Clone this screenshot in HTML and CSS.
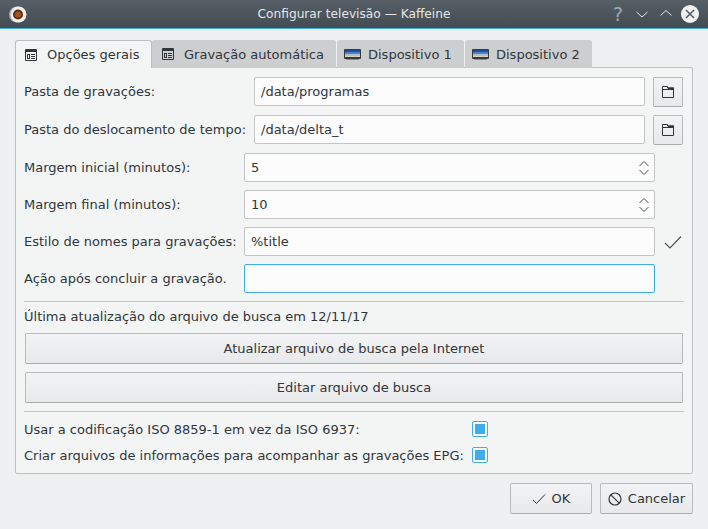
FILE: index.html
```html
<!DOCTYPE html>
<html lang="pt">
<head>
    <meta charset="UTF-8">
    <title>Configurar televisão — Kaffeine</title>
    <link rel="stylesheet" href="styles.css">
</head>
<body>

    <div class="titlebar">
        <svg class="app-icon" width="18" height="18" viewBox="0 0 18 18">
            <circle cx="8" cy="9.5" r="8" fill="#a9adaf"/>
            <circle cx="9.5" cy="9.5" r="8" fill="#f1efec"/>
            <circle cx="9" cy="9.5" r="5" fill="#5d3018"/>
            <circle cx="9" cy="9.5" r="3" fill="#a5521f"/>
        </svg>
        <span class="title">Configurar televisão — Kaffeine</span>
        <div class="win-buttons">
            <span class="help">?</span>
            <svg width="14" height="14" viewBox="0 0 14 14"><path d="M1.5 5 7 10l5.5-5" fill="none" stroke="#e3e5e7"/></svg>
            <svg width="14" height="14" viewBox="0 0 14 14"><path d="M1.5 8.5 7 3.500l5.5 5" fill="none" stroke="#e3e5e7"/></svg>
            <svg class="close" width="18" height="18" viewBox="0 0 18 18"><circle cx="9" cy="9" r="9" fill="#f2f3f3"/><path d="M5 5l8 8M13 5l-8 8" stroke="#4d5860" stroke-width="1.5"/></svg>
        </div>
    </div>

    <div class="dialog">
        <div class="tabs">
            <div class="tab active">
                <svg class="tab-icon" width="12" height="12" viewBox="0 0 12 12"><path d="M.5.5h11v11H.5z" fill="none" stroke="#31363b"/><path d="M1 1h10v2H1zM2 5h3v5H2zM6 5h4v1H6zM6 7h4v1H6zM6 9h4v1H6z" fill="#31363b"/><path d="M3 6h1v3H3z" fill="#f3f5f5"/></svg>
                Opções gerais
            </div>
            <div class="tab">
                <svg class="tab-icon" width="12" height="12" viewBox="0 0 12 12"><path d="M.5.5h11v11H.5z" fill="none" stroke="#31363b"/><path d="M1 1h10v2H1zM2 5h3v5H2zM6 5h4v1H6zM6 7h4v1H6zM6 9h4v1H6z" fill="#31363b"/><path d="M3 6h1v3H3z" fill="#cdcecf"/></svg>
                Gravação automática
            </div>
            <div class="tab tab-dev">
                <svg class="tab-icon" width="17" height="11" viewBox="0 0 17 11"><rect width="17" height="10" rx="1" fill="#3a3734"/><rect x="1" y="1" width="15" height="2" fill="#1f4f94"/><rect x="1" y="3" width="15" height="2" fill="#4f82c0"/><rect x="1" y="5" width="15" height="2" fill="#a9c0da"/><rect x="1" y="7" width="15" height="1" fill="#d3d2c4"/><rect x="2" y="10" width="13" height="1" fill="#8d8a86"/></svg>
                Dispositivo 1
            </div>
            <div class="tab tab-dev">
                <svg class="tab-icon" width="17" height="11" viewBox="0 0 17 11"><rect width="17" height="10" rx="1" fill="#3a3734"/><rect x="1" y="1" width="15" height="2" fill="#1f4f94"/><rect x="1" y="3" width="15" height="2" fill="#4f82c0"/><rect x="1" y="5" width="15" height="2" fill="#a9c0da"/><rect x="1" y="7" width="15" height="1" fill="#d3d2c4"/><rect x="2" y="10" width="13" height="1" fill="#8d8a86"/></svg>
                Dispositivo 2
            </div>
        </div>

        <div class="panel">
            <div class="row row-path">
                <label class="label-wide">Pasta de gravações:</label>
                <div class="field grow">/data/programas</div>
                <button class="tool-btn">
                    <svg width="12" height="12" viewBox="0 0 12 12"><path d="M.5 11.500V.5h5V2h6v9.500z" fill="none" stroke="#31363b"/><path d="M6 1.500h6V4H1V3h5z" fill="#31363b"/></svg>
                </button>
            </div>
            <div class="row row-path">
                <label class="label-wide">Pasta do deslocamento de tempo:</label>
                <div class="field grow">/data/delta_t</div>
                <button class="tool-btn">
                    <svg width="12" height="12" viewBox="0 0 12 12"><path d="M.5 11.500V.5h5V2h6v9.500z" fill="none" stroke="#31363b"/><path d="M6 1.500h6V4H1V3h5z" fill="#31363b"/></svg>
                </button>
            </div>
            <div class="row">
                <label class="label-std">Margem inicial (minutos):</label>
                <div class="field spin">5
                    <svg width="10" height="18" viewBox="0 0 10 18"><path d="M.5 7 5 2.500 9.500 7M.5 11 5 15.500 9.500 11" fill="none" stroke="#4d4d4d"/></svg>
                </div>
            </div>
            <div class="row">
                <label class="label-std">Margem final (minutos):</label>
                <div class="field spin">10
                    <svg width="10" height="18" viewBox="0 0 10 18"><path d="M.5 7 5 2.500 9.500 7M.5 11 5 15.500 9.500 11" fill="none" stroke="#4d4d4d"/></svg>
                </div>
            </div>
            <div class="row">
                <label class="label-std">Estilo de nomes para gravações:</label>
                <div class="field fixed">%title</div>
                <svg class="ok-mark" width="18" height="14" viewBox="0 0 18 14"><path d="M1 8l5 5L17 1.500" fill="none" stroke="#4d4d4d" stroke-width="1.100"/></svg>
            </div>
            <div class="row">
                <label class="label-std">Ação após concluir a gravação.</label>
                <div class="field fixed focused"></div>
            </div>

            <div class="sep"></div>
            <div class="info">Última atualização do arquivo de busca em 12/11/17</div>
            <button class="wide-btn">Atualizar arquivo de busca pela Internet</button>
            <button class="wide-btn">Editar arquivo de busca</button>
            <div class="sep sep-bottom"></div>

            <div class="check-row">
                <span class="check-label">Usar a codificação ISO 8859-1 em vez da ISO 6937:</span>
                <span class="check"></span>
            </div>
            <div class="check-row">
                <span class="check-label">Criar arquivos de informações para acompanhar as gravações EPG:</span>
                <span class="check"></span>
            </div>
        </div>

        <div class="footer">
            <button class="btn btn-ok">
                <svg width="14" height="12" viewBox="0 0 14 12"><path d="M1 7l3.500 3.500L13 1.500" fill="none" stroke="#31363b"/></svg>
                OK
            </button>
            <button class="btn btn-cancel">
                <svg width="14" height="14" viewBox="0 0 14 14"><circle cx="7" cy="7" r="6" fill="none" stroke="#31363b" stroke-width="1.200"/><path d="M2.800 2.800l8.400 8.400" stroke="#31363b" stroke-width="1.200"/></svg>
                Cancelar
            </button>
        </div>
    </div>

</body>
</html>
```

FILE: styles.css
```css
* {
    box-sizing: border-box;
}
body {
    margin: 0;
    width: 708px;
    height: 529px;
    overflow: hidden;
    background: #eff0f1;
    font-family: "DejaVu Sans", sans-serif;
    font-size: 13px;
    color: #31363b;
}
button {
    font-family: inherit;
    font-size: 13px;
    color: #31363b;
    padding: 0;
}

/* window title */
.titlebar {
    position: relative;
    height: 29px;
    display: flex;
    align-items: center;
    justify-content: center;
    background: linear-gradient(#565f66, #434c53);
    border-bottom: 1px solid #3daee9;
    color: #e3e5e7;
    font-size: 12.2px;
}
.app-icon {
    position: absolute;
    left: 9px;
    top: 5px;
}
.win-buttons {
    position: absolute;
    right: 9px;
    top: 5px;
    display: flex;
    align-items: center;
    gap: 10px;
}
.help {
    font-size: 19px;
    line-height: 18px;
    width: 14px;
    text-align: center;
    color: #a3a8ac;
}
.close {
    margin-left: -2px;
}

/* dialog */
.dialog {
    padding: 11px 15px 0;
}
.tabs {
    display: flex;
    height: 28px;
    gap: 1px;
}
.tab {
    display: flex;
    align-items: center;
    gap: 10px;
    padding-left: 10px;
    background: #cdcecf;
    border-radius: 3px 3px 0 0;
}
.tab:nth-child(1) { width: 137px; }
.tab:nth-child(2) { width: 184px; margin-left: -1px; }
.tab:nth-child(3) { width: 127px; }
.tab:nth-child(4) { width: 127px; }
.tab.active {
    position: relative;
    z-index: 1;
    padding-left: 9px;
    background: #f3f5f5;
    border: 1px solid #bcbebf;
    border-bottom: none;
}
.tab-dev {
    gap: 7px;
    padding-left: 7px;
}
.tab-icon {
    flex: none;
}
.panel {
    height: 407px;
    margin-top: -1px;
    padding: 9px 9px 0 8px;
    background: #f3f5f5;
    border: 1px solid #bcbebf;
    border-radius: 0 2px 2px 2px;
}
.row {
    display: flex;
    align-items: center;
    height: 29px;
    margin-bottom: 8px;
}
.row-path {
    margin-bottom: 9px;
}
.label-wide {
    width: 230px;
    flex: none;
}
.label-std {
    width: 220px;
    flex: none;
}
.field {
    height: 29px;
    line-height: 27px;
    padding-left: 6px;
    background: #fcfcfc;
    border: 1px solid #c3c5c6;
    border-radius: 2px;
}
.grow {
    flex: 1;
}
.fixed {
    width: 411px;
}
.spin {
    width: 411px;
    display: flex;
    align-items: center;
    justify-content: space-between;
    padding-right: 5px;
}
.focused {
    border-color: #3daee9;
}
.ok-mark {
    margin-left: 9px;
}
.tool-btn {
    align-self: flex-start;
    width: 30px;
    height: 30px;
    margin-left: 8px;
    display: flex;
    align-items: center;
    justify-content: center;
    background: linear-gradient(#f2f3f4, #e8e9ea);
    border: 1px solid #b8babb;
    border-bottom-color: #a9abac;
    border-radius: 2px;
}
.sep {
    height: 1px;
    width: 660px;
    background: #c3c5c6;
}
.info {
    line-height: 16px;
    margin-top: 7px;
}
.wide-btn {
    display: block;
    width: 658px;
    height: 31px;
    margin-left: 1px;
    margin-top: 8px;
    background: linear-gradient(#f2f3f4, #e8e9ea);
    border: 1px solid #b8babb;
    border-bottom-color: #a9abac;
    border-radius: 2px;
}
.sep-bottom {
    margin-top: 8px;
}
.check-row {
    display: flex;
    align-items: center;
    height: 16px;
    margin-top: 10px;
}
.sep + .check-row {
    margin-top: 9px;
}
.check-label {
    width: 448px;
    flex: none;
    white-space: nowrap;
}
.check {
    width: 16px;
    height: 16px;
    padding: 2px;
    background: linear-gradient(#3daee9, #3daee9) content-box, #fcfcfc;
    border: 1px solid #3daee9;
    border-radius: 2px;
}
.footer {
    display: flex;
    justify-content: flex-end;
    gap: 8px;
    margin-top: 9px;
}
.btn {
    height: 31px;
    display: flex;
    align-items: center;
    justify-content: center;
    gap: 6px;
    background: linear-gradient(#f2f3f4, #e8e9ea);
    border: 1px solid #b8babb;
    border-bottom-color: #a9abac;
    border-radius: 2px;
}
.btn-ok {
    width: 82px;
}
.btn-cancel {
    width: 93px;
}
```
